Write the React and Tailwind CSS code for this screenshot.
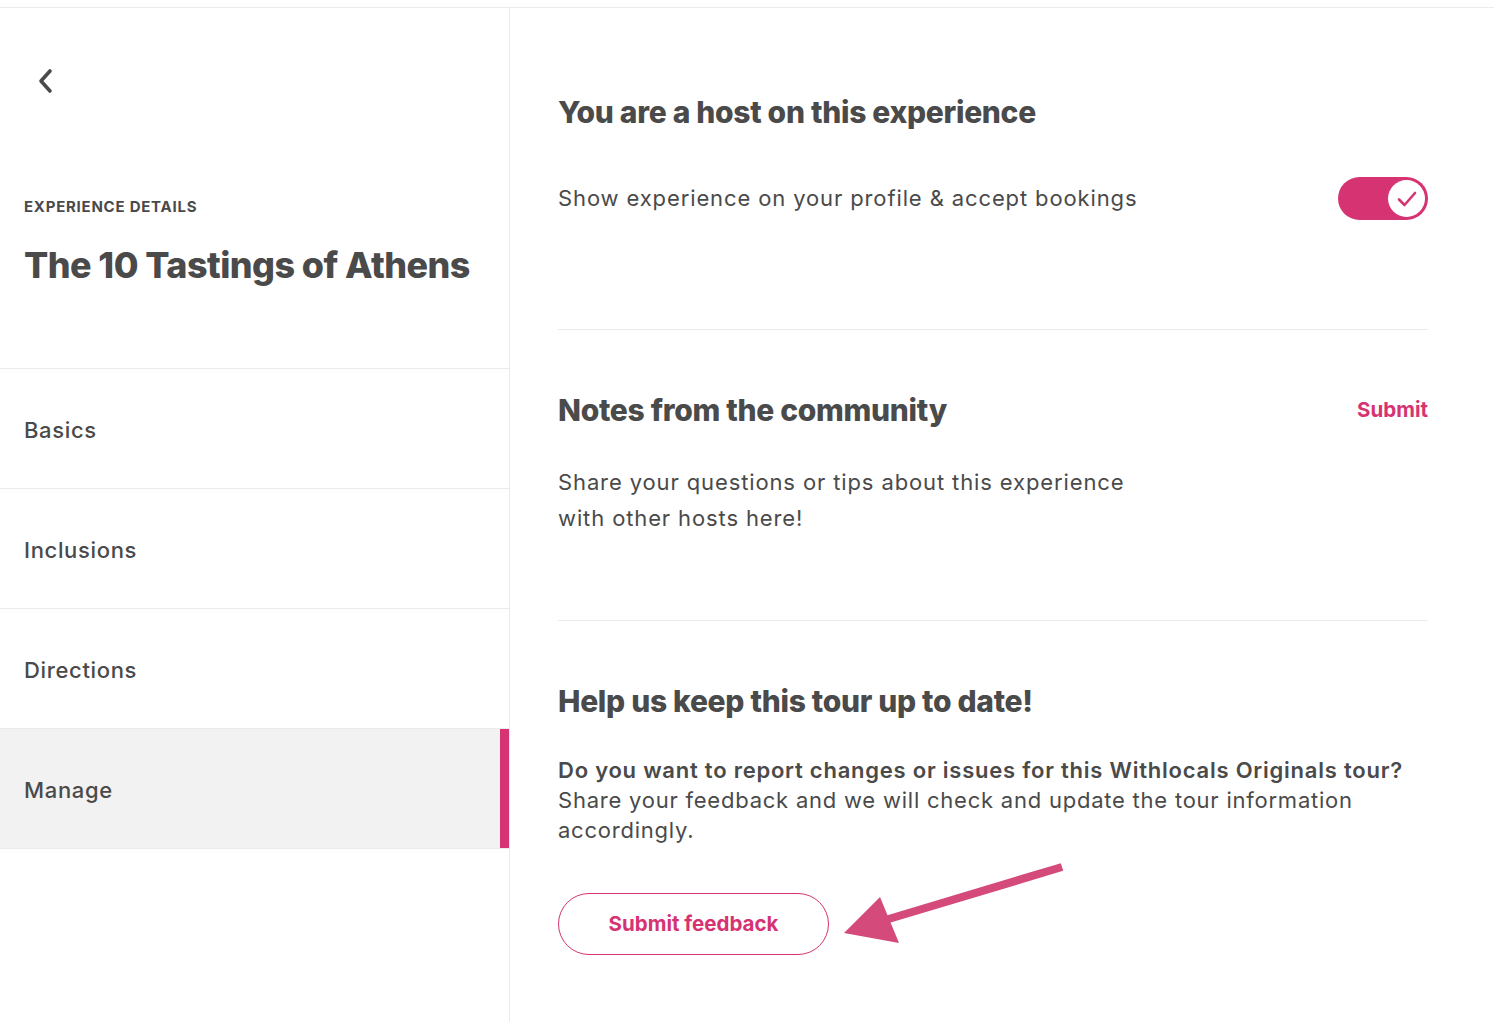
import React, { useState } from 'react';

const pink = 'text-[#d63372]';

const NavItem = ({ label, active }) => (
  <div
    className={`flex items-center h-[120px] border-b border-[#ebebeb] pl-6 pt-1 relative ${
      active ? 'bg-[#f2f2f2]' : ''
    }`}
  >
    <span className="text-[22px] font-medium tracking-[0.03em] text-[#4a4a4a]">{label}</span>
    {active && <div className="absolute right-0 top-0 bottom-0 w-[9px] bg-[#d63372]" />}
  </div>
);

const Toggle = ({ on, onClick }) => (
  <button
    onClick={onClick}
    className={`w-[90px] h-[43px] rounded-full flex items-center p-[3px] ${
      on ? 'bg-[#d63372] justify-end' : 'bg-gray-300 justify-start'
    }`}
  >
    <span className="w-[37px] h-[37px] rounded-full bg-white flex items-center justify-center">
      {on && (
        <svg width="20" height="16" viewBox="0 0 20 16" fill="none">
          <path d="M2 8.5 L7.5 14 L18 2" stroke="#d63372" strokeWidth="2.6" strokeLinecap="round" strokeLinejoin="round" />
        </svg>
      )}
    </span>
  </button>
);

const App = () => {
  const [visible, setVisible] = useState(true);

  return (
    <div className="min-h-screen bg-white font-['Inter',sans-serif] text-[#4a4a4a] pt-[7px]">
      <div className="flex border-t border-[#ebebeb] min-h-[1015px]">
        {/* sidebar */}
        <aside className="w-[510px] shrink-0 border-r border-[#ebebeb]">
          <div className="h-[360px] pl-6 flex flex-col">
            <button className="mt-[61px] ml-[10px] w-6 h-6 flex items-center justify-center">
              <svg width="18" height="26" viewBox="0 0 18 26" fill="none">
                <path d="M13 3 L4 13 L13 23" stroke="#4a4a4a" strokeWidth="3.6" strokeLinecap="round" strokeLinejoin="round" />
              </svg>
            </button>
            <div className="mt-[103px] text-[15px] font-bold tracking-[0.05em] uppercase">Experience details</div>
            <h1 className="mt-[24px] text-[35.9px] leading-[44px] font-extrabold tracking-[-0.015em]">The 10 Tastings of Athens</h1>
          </div>
          <div className="border-t border-[#ebebeb]">
            <NavItem label="Basics" />
            <NavItem label="Inclusions" />
            <NavItem label="Directions" />
            <NavItem label="Manage" active />
          </div>
        </aside>

        {/* main */}
        <main className="flex-1 pl-12 pr-[66px]">
          <section className="pt-[86px] pb-[109px] border-b border-[#ebebeb]">
            <h2 className="text-[30px] leading-9 font-extrabold tracking-[-0.01em]">You are a host on this experience</h2>
            <div className="mt-[47px] flex items-center justify-between">
              <span className="text-[22px] font-normal tracking-[0.04em]">Show experience on your profile &amp; accept bookings</span>
              <Toggle on={visible} onClick={() => setVisible(!visible)} />
            </div>
          </section>

          <section className="pt-[62px] pb-[84px] border-b border-[#ebebeb]">
            <div className="flex items-center justify-between">
              <h2 className="text-[30px] leading-9 font-extrabold tracking-[-0.01em]">Notes from the community</h2>
              <button className={`text-[20.5px] font-bold ${pink}`}>Submit</button>
            </div>
            <p className="mt-[36px] text-[22px] leading-9 tracking-[0.04em] max-w-[590px]">
              Share your questions or tips about this experience with other hosts here!
            </p>
          </section>

          <section className="pt-[62px]">
            <h2 className="text-[30px] leading-9 font-extrabold tracking-[-0.01em]">Help us keep this tour up to date!</h2>
            <p className="mt-[36px] text-[22px] leading-[30px] tracking-[0.035em]">
              <span className="font-semibold">Do you want to report changes or issues for this Withlocals Originals tour?</span>
              <br />
              Share your feedback and we will check and update the tour information accordingly.
            </p>
            <div className="mt-[48px] flex items-center relative">
              <button className={`w-[271px] h-[62px] rounded-full border border-[#d63372] text-[20.5px] font-bold ${pink}`}>
                Submit feedback
              </button>
              <svg className="absolute left-[284px] top-[-30px]" width="224" height="80" viewBox="0 0 224 80" fill="none">
                <path d="M220 4 L40 58" stroke="#d44a7a" strokeWidth="8" strokeLinecap="butt" />
                <path d="M2 70 L38 34 L57 80 Z" fill="#d44a7a" />
              </svg>
            </div>
          </section>
        </main>
      </div>
    </div>
  );
};

export default App;
